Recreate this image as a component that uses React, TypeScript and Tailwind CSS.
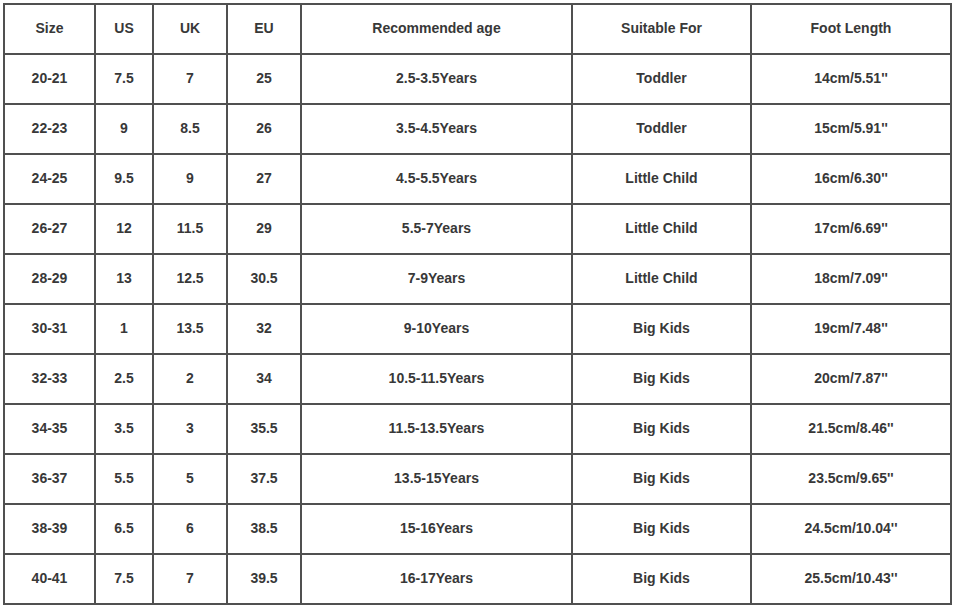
const headers = ["Size", "US", "UK", "EU", "Recommended age", "Suitable For", "Foot Length"];

const rows: string[][] = [
  ["20-21", "7.5", "7", "25", "2.5-3.5Years", "Toddler", "14cm/5.51''"],
  ["22-23", "9", "8.5", "26", "3.5-4.5Years", "Toddler", "15cm/5.91''"],
  ["24-25", "9.5", "9", "27", "4.5-5.5Years", "Little Child", "16cm/6.30''"],
  ["26-27", "12", "11.5", "29", "5.5-7Years", "Little Child", "17cm/6.69''"],
  ["28-29", "13", "12.5", "30.5", "7-9Years", "Little Child", "18cm/7.09''"],
  ["30-31", "1", "13.5", "32", "9-10Years", "Big Kids", "19cm/7.48''"],
  ["32-33", "2.5", "2", "34", "10.5-11.5Years", "Big Kids", "20cm/7.87''"],
  ["34-35", "3.5", "3", "35.5", "11.5-13.5Years", "Big Kids", "21.5cm/8.46''"],
  ["36-37", "5.5", "5", "37.5", "13.5-15Years", "Big Kids", "23.5cm/9.65''"],
  ["38-39", "6.5", "6", "38.5", "15-16Years", "Big Kids", "24.5cm/10.04''"],
  ["40-41", "7.5", "7", "39.5", "16-17Years", "Big Kids", "25.5cm/10.43''"],
];

const widths = [91, 58, 74, 74, 271, 179, 200];

export default function App() {
  return (
    <div className="w-[956px] h-[607px] bg-white pt-[3px] pl-[3px]" style={{ fontFamily: "'Liberation Sans', Arial, sans-serif" }}>
      <table className="border-collapse table-fixed w-[949px] text-[14px] font-bold text-[#383838]">
        <colgroup>
          {widths.map((w, i) => (
            <col key={i} style={{ width: w }} />
          ))}
        </colgroup>
        <thead>
          <tr className="h-[50px]">
            {headers.map((h) => (
              <th key={h} className="border-2 border-[#505050] text-center align-middle font-bold p-0 pb-[2px]">
                {h}
              </th>
            ))}
          </tr>
        </thead>
        <tbody>
          {rows.map((r) => (
            <tr key={r[0]} className="h-[50px]">
              {r.map((c, i) => (
                <td key={i} className="border-2 border-[#505050] text-center align-middle p-0 pb-[2px]">
                  {c}
                </td>
              ))}
            </tr>
          ))}
        </tbody>
      </table>
    </div>
  );
}
